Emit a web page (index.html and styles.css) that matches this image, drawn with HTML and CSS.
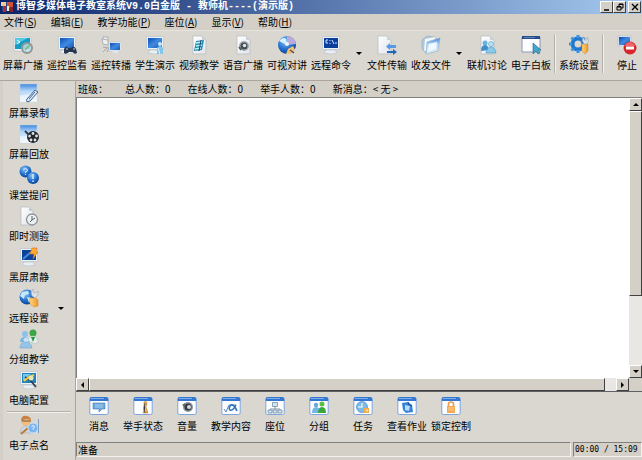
FILE: index.html
```html
<!DOCTYPE html>
<html lang="zh-CN">
<head>
<meta charset="utf-8">
<meta name="viewport" content="width=device-width,initial-scale=1">
<title>博智多媒体电子教室系统V9.0白金版</title>
<link rel="stylesheet" href="styles.css">
</head>
<body>

<!-- shared gradients and icon parts -->
<svg class="defs" aria-hidden="true">
  <defs>
    <linearGradient id="gBlue" x1="0" y1="0" x2="1" y2="1"><stop offset="0" stop-color="#0c4cb4"/><stop offset=".5" stop-color="#3f8be0"/><stop offset="1" stop-color="#1b57b5"/></linearGradient>
    <linearGradient id="gSky" x1="0" y1="0" x2="0" y2="1"><stop offset="0" stop-color="#3f86df"/><stop offset=".4" stop-color="#b8d9f8"/><stop offset="1" stop-color="#e6f2fd"/></linearGradient>
    <linearGradient id="gPaper" x1="0" y1="0" x2="1" y2="1"><stop offset="0" stop-color="#fff"/><stop offset="1" stop-color="#dfe4ea"/></linearGradient>
    <radialGradient id="gBall" cx=".4" cy=".3" r=".7"><stop offset="0" stop-color="#8cc4f8"/><stop offset=".6" stop-color="#2371cd"/><stop offset="1" stop-color="#0d459c"/></radialGradient>
    <linearGradient id="gGold" x1="0" y1="0" x2="1" y2="0"><stop offset="0" stop-color="#ffd778"/><stop offset="1" stop-color="#ee962b"/></linearGradient>
  </defs>
  <symbol id="monitor" viewBox="0 0 20 20">
    <path d="M5 15h9l2 3q-6 2-13 0z" fill="#e9eef3" stroke="#b4bec8" stroke-width=".6"/>
    <rect x="1.5" y="1.5" width="17" height="13" rx="1" fill="#edf2f6" stroke="#b4c0cb" stroke-width=".7"/>
    <rect x="3" y="3" width="14" height="10" fill="url(#gBlue)"/>
  </symbol>
  <symbol id="page" viewBox="0 0 20 20">
    <path d="M4 1h9l4 4v14H4z" fill="url(#gPaper)" stroke="#b3bac2" stroke-width=".7"/>
    <path d="M13 1v4h4z" fill="#cad2da"/>
  </symbol>
  <symbol id="win" viewBox="0 0 20 20">
    <rect x=".8" y="1.5" width="18.4" height="17" rx="1.5" fill="#fcfdff" stroke="#7da5dc"/>
    <path d="M.8 5V3Q.8 1 3 1h14q2.200 0 2.200 2v2z" fill="#3577d0"/>
    <path d="M2 2.500h13" stroke="#8fbcf1" stroke-width=".8"/>
  </symbol>
  <symbol id="note" viewBox="0 0 20 20">
    <path d="M1 1h17v18H1z" fill="url(#gSky)" stroke="#bdd0e5" stroke-width=".5"/>
    <path d="M1 12q9 1 17-5v12H1z" fill="#fff" fill-opacity=".5"/>
  </symbol>
</svg>

<header class="titlebar">
  <svg class="logo" viewBox="0 0 12 12"><path d="M1 1h9v9H1z" fill="#264c8d"/><path d="M0 1h5v4H0z" fill="#eecb9d"/><path d="M6 1h6v6H6z" fill="#cf5034"/><path d="M2 5h3v6H2z" fill="#b4272e"/><path d="M6 5h2v5H6z" fill="#f8e8d0"/><path d="M9 6h3v5H9z" fill="#872229"/></svg>
  <h1>博智多媒体电子教室系统V9.0白金版 - 教师机----(演示版)</h1>
  <div class="win-buttons">
    <button aria-label="最小化"><svg viewBox="0 0 10 8"><path d="M2 7h5" stroke="#000" stroke-width="1.500"/></svg></button>
    <button aria-label="还原"><svg viewBox="0 0 10 8"><path d="M4 3V1h4v4H6M4 1.500h4M2 3.500h4V7H2zM2 4h4" fill="none" stroke="#000"/></svg></button>
    <button class="close" aria-label="关闭"><svg viewBox="0 0 10 8"><path d="M2 1l6 6M8 1L2 7" stroke="#000" stroke-width="1.400"/></svg></button>
  </div>
</header>

<nav class="menubar">
  <button>文件(<u>S</u>)</button>
  <button>编辑(<u>E</u>)</button>
  <button>教学功能(<u>P</u>)</button>
  <button>座位(<u>A</u>)</button>
  <button>显示(<u>V</u>)</button>
  <button>帮助(<u>H</u>)</button>
</nav>

<div class="toolbar">
  <button class="tool"><svg viewBox="0 0 20 20"><rect x="1" y="2" width="17" height="14" rx="1" fill="#f0f5f7" stroke="#a9bac6" stroke-width=".6"/><path d="M2 3h15v11H2z" fill="#179bc4"/><path d="M2 3h13L2 10z" fill="#55c7e2"/><path d="M4 5l3 2-3 2" stroke="#fff" fill="none"/><circle cx="14" cy="13" r="5" fill="#bfe0e8" fill-opacity=".8" stroke="#8f9693" stroke-width="2"/><path d="M12 15l5-5" stroke="#78b874" stroke-width="1.500"/></svg>屏幕广播</button>
  <button class="tool"><svg viewBox="0 0 20 20"><use href="#monitor"/><path d="M7 18v-4q2-4 4-1h3q3-3 5 1l1 4q-3 2-4-1h-4q-3 3-5 1z" fill="#26354d"/><path d="M9 14h2M16 14h2" stroke="#b4c8e5"/></svg>遥控监看</button>
  <button class="tool"><svg viewBox="0 0 20 20"><path d="M1 4l6 1v5l-5-1zM2 4V2h5v3" fill="#f0f0ee" stroke="#9aa3ab" stroke-width=".8"/><path d="M2 17l4-4M2 12l6 1-2 4" stroke="#a4a7a9" fill="none"/><path d="M8 7h12v9H8z" fill="#eef3f7" stroke="#a8b5c3" stroke-width=".5"/><path d="M9 8h10v7H9z" fill="url(#gBlue)"/><path d="M12 16h5l1 2h-7z" fill="#dfe5eb"/></svg>遥控转播</button>
  <button class="tool"><svg viewBox="0 0 20 20"><use href="#monitor"/><circle cx="15" cy="9" r="2" fill="#c7e7fb"/><path d="M12 13q3-4 6 0v6h-6z" fill="#80c5ee"/><path d="M13 13l2 6" stroke="#e0f4ff"/></svg>学生演示</button>
  <button class="tool"><svg viewBox="0 0 20 20"><use href="#page"/><path d="M7 6l8-1-2 10-8 1z" fill="#238bb2"/><path d="M7 8l6-1M7 11l6-1M6 14l6-1" stroke="#bdf0fa" stroke-width="1.300"/><path d="M12 5l-2 11" stroke="#1a4969"/></svg>视频教学</button>
  <button class="tool"><svg viewBox="0 0 20 20"><use href="#page"/><circle cx="11" cy="11" r="5" fill="#a5abaf"/><circle cx="11" cy="11" r="3.500" fill="#444d54"/><circle cx="11.500" cy="10.500" r="1.800" fill="#dce2e5"/><path d="M6 12l2 3" stroke="#4b555d" stroke-width="1.500"/></svg>语音广播</button>
  <button class="tool"><svg viewBox="0 0 20 20"><circle cx="10" cy="10" r="9" fill="url(#gBall)"/><path d="M10 1a9 9 0 0 1 9 8l-9 1z" fill="#b8a9de"/><path d="M2 6q4-5 7-2l1 6z" fill="#d7f1ff"/><circle cx="10" cy="9" r="2" fill="#eef7fb"/><path d="M11 14l5-3 2 4-5 4h-4z" fill="#f1c17b"/><path d="M13 15l4 3" stroke="#5a4e49" stroke-width="1.500"/></svg>可视对讲</button>
  <button class="tool"><svg viewBox="0 0 20 20"><use href="#monitor"/><path d="M3 3h14v10H3z" fill="#0a3d9c"/><path d="M7 5H5v3h2M9 5v1M9 8v1M11 5l2 4M14 8h2" stroke="#d5e7ff" fill="none"/></svg>远程命令</button>
  <button class="drop" aria-label="远程命令选项"></button>
  <button class="tool"><svg viewBox="0 0 20 20"><path d="M1 1h9l4 4v14H1z" fill="url(#gPaper)" stroke="#b3bac2" stroke-width=".7"/><path d="M10 1v4h4" fill="#ccd4dd"/><path d="M19 10h-6V8l-4 3.500 4 3.500v-2h6z" fill="#5499e6"/><path d="M10 16h6v-2l4 3-4 3v-2h-6z" fill="#2265bb"/></svg>文件传输</button>
  <button class="tool"><svg viewBox="0 0 20 20"><path d="M1 5l5-4 8 1v13l-9 3-4-4z" fill="#b1c9d9" stroke="#8ba7bd" stroke-width=".6"/><path d="M4 4l10-2v12L3 16z" fill="#f2f7fa"/><path d="M6 7l13-4-2 13-12 3z" fill="url(#gSky)" stroke="#89aac3" stroke-width=".6"/><path d="M8 9l8-2-1 7-8 2z" fill="#f3faff"/></svg>收发文件</button>
  <button class="drop" aria-label="收发文件选项"></button>
  <button class="tool"><svg viewBox="0 0 20 20"><use href="#page"/><circle cx="8" cy="8" r="2.500" fill="#69b2dc"/><path d="M4 16q0-6 4-6 3 0 4 5z" fill="#3f8ecb"/><circle cx="14" cy="9" r="2.500" fill="#b7e1f3" stroke="#56a6ce" stroke-width=".6"/><path d="M9 18q1-6 5-6t5 6z" fill="#8bcae8" stroke="#4796c4" stroke-width=".6"/></svg>联机讨论</button>
  <button class="tool"><svg viewBox="0 0 20 20"><path d="M1 2h18v15H1z" fill="#fdfdff" stroke="#8799b5"/><path d="M1 1h18v3H1z" fill="#254d8c"/><path d="M3 2.500h11" stroke="#809bc3" stroke-width=".7"/><path d="M12 8v11l3-3 2 3 2-1-2-3h3z" fill="#40a6cf" stroke="#246485" stroke-width=".6"/></svg>电子白板</button>
  <span class="split"></span>
  <button class="tool"><svg viewBox="0 0 20 20"><circle cx="9" cy="9" r="5.500" fill="none" stroke="#1f78ce" stroke-width="4"/><path d="M9 0v3M9 15v3M0 9h3M2.500 2.500l2 2M15.500 2.500l-2 2M2.500 15.500l2-2" stroke="#3b93e3" stroke-width="3"/><path d="M13 9h6v7l-3 3-3-3z" fill="url(#gGold)" stroke="#cf8026" stroke-width=".5"/><path d="M15 2l-2 3 2 4h3l2-4-2-3v3h-3z" fill="#d9e0e7" stroke="#9ba6af" stroke-width=".6"/></svg>系统设置</button>
  <span class="split"></span>
  <button class="tool last"><svg viewBox="0 0 20 20"><rect x="1" y="1" width="13" height="10" fill="#e8eff6" stroke="#acbac9" stroke-width=".6"/><path d="M2 2h11v8H2z" fill="url(#gBlue)"/><path d="M5 11h5l1 3H3z" fill="#dae3ec"/><circle cx="13" cy="13" r="6.500" fill="#d8262d"/><path d="M7.500 11q5-8 11 0z" fill="#ed6469"/><path d="M9 11.500h8v3H9z" fill="#fff"/></svg>停止</button>
</div>

<div class="workspace">
  <aside class="sidebar">
    <button class="side"><svg viewBox="0 0 20 20"><use href="#note"/><path d="M8 16l8-9 3 2-8 9q-5 2-3-2z" fill="#dce9f5" stroke="#3f608c"/><path d="M10 16l6-7" stroke="#416ba1"/></svg>屏幕录制</button>
    <button class="side"><svg viewBox="0 0 20 20"><use href="#note"/><circle cx="14" cy="13" r="6" fill="#24282c"/><g fill="#dde3e6"><circle cx="14" cy="9.500" r="1.400"/><circle cx="10.500" cy="12" r="1.400"/><circle cx="17.500" cy="12" r="1.400"/><circle cx="12" cy="16" r="1.400"/><circle cx="16" cy="16" r="1.400"/></g><path d="M6 7l4 4" stroke="#353b40" stroke-width="2"/></svg>屏幕回放</button>
    <button class="side"><svg viewBox="0 0 20 20"><circle cx="6.500" cy="6.500" r="6" fill="url(#gBall)"/><path d="M4.500 5q2-3 4 0 0 1-2 2v1M6.500 9v1" fill="none" stroke="#c2e1ff" stroke-width="1.200"/><circle cx="14" cy="13" r="6" fill="url(#gBall)"/><path d="M14 9v5M14 15.500V17" stroke="#d5edff" stroke-width="1.500"/></svg>课堂提问</button>
    <button class="side"><svg viewBox="0 0 20 20"><path d="M2 1h8l4 4v14H2z" fill="url(#gPaper)" stroke="#b3bac2" stroke-width=".7"/><path d="M10 1v4h4" fill="#c5ccd3"/><circle cx="13" cy="13.500" r="5.500" fill="#eef2f4" stroke="#8c9297" stroke-width="1.300"/><path d="M13 10v4l3-2M13 14l-2 2" stroke="#53616c" fill="none"/></svg>即时测验</button>
    <button class="side"><svg viewBox="0 0 20 20"><use href="#monitor"/><path d="M3 3h14v10H3z" fill="#0b4199"/><path d="M4 12l8-7" stroke="#3f8de1" stroke-width="2"/><path d="M13 1h5l-1 4h2l-5 7 1-5h-4z" fill="#ffac2d" stroke="#d86c1b" stroke-width=".6"/></svg>黑屏肃静</button>
    <div class="side-row">
      <button class="side"><svg viewBox="0 0 20 20"><circle cx="8" cy="9" r="7.500" fill="url(#gBall)"/><path d="M3 4l6-1 1 3-4 1-1 4-4-3zM8 9l5 1-3 5z" fill="#c8e8f9"/><path d="M11 10h6l2 2v6l-4 1-4-3z" fill="url(#gGold)" stroke="#d68a30" stroke-width=".5"/><path d="M14 1l-2 3 1 4 3 2 3-3V3l-2 2-3-1z" fill="#dce2e8" stroke="#9da6ae" stroke-width=".6"/></svg>远程设置</button>
      <button class="drop" aria-label="远程设置选项"></button>
    </div>
    <button class="side"><svg viewBox="0 0 20 20"><circle cx="6" cy="5" r="3" fill="#8bc2e8"/><path d="M1 13q0-5 5-5 4 0 5 5z" fill="#77b4e3"/><circle cx="14" cy="4" r="3.500" fill="#3fa348"/><path d="M9 12q0-5 5-5 5 0 5 6l-3 2z" fill="#e3eeeb" stroke="#9ab8ac" stroke-width=".5"/><path d="M12 8l2 5 2-5z" fill="#2b953b"/><circle cx="7" cy="11" r="2.500" fill="#c5e2f8"/><path d="M1 19q0-6 6-6 5 0 6 6z" fill="#96c4e9" stroke="#6b9fc7" stroke-width=".5"/></svg>分组教学</button>
    <button class="side"><svg viewBox="0 0 20 20"><use href="#monitor"/><path d="M3 3h14v10H3z" fill="#2183bd"/><path d="M4 4h8l-8 7z" fill="#76c6e6"/><path d="M6 7l5 3 6 7" stroke="#343c48" stroke-width="1.700" fill="none"/><path d="M5 11l5-4 5-2" stroke="#f6c93f" stroke-width="2" fill="none"/><circle cx="12" cy="8" r="2.500" fill="#e8e5b9"/></svg>电脑配置</button>
    <hr>
    <button class="side"><svg viewBox="0 0 20 20"><circle cx="7" cy="6" r="5" fill="#f4bd7d"/><path d="M2 6q0-6 6-5 4 1 4 4l-5-1z" fill="#c68345"/><path d="M3 6h9" stroke="#6d5646"/><path d="M1 18q1-7 6-7t6 7z" fill="#cbd8e4" stroke="#98a8b7" stroke-width=".5"/><path d="M2 19l7-6" stroke="#c47833" stroke-width="2"/><circle cx="14" cy="13" r="5" fill="#7bb5ed" stroke="#c8e1f8"/><path d="M12.500 11.500q2-2 3 0 0 1-1.500 2v1" stroke="#fff" fill="none"/><path d="M19.500 4v14" stroke="#6991c0" stroke-width=".8"/></svg>电子点名</button>
  </aside>

  <main class="main">
    <div class="info">
      <span>班级：</span><span>总人数：0</span><span>在线人数：0</span><span>举手人数：0</span><span>新消息：&lt; 无 &gt;</span>
    </div>

    <div class="view">
      <div class="canvas"></div>
      <div class="scroll vertical">
        <button class="arrow up" aria-label="向上滚动"></button>
        <div class="track"><div class="thumb"></div></div>
        <button class="arrow down" aria-label="向下滚动"></button>
      </div>
      <div class="scroll horizontal">
        <button class="arrow left" aria-label="向左滚动"></button>
        <div class="track"><div class="thumb"></div></div>
        <button class="arrow right" aria-label="向右滚动"></button>
      </div>
    </div>

    <div class="actions">
      <button class="tool"><svg viewBox="0 0 20 20"><use href="#win"/><path d="M4 7h12v6h-3l-3 3v-3H4z" fill="#6ba8df" stroke="#467fb7" stroke-width=".6"/><path d="M6 9h8M6 11h8" stroke="#c4e0f7" stroke-width=".7"/></svg>消息</button>
      <button class="tool"><svg viewBox="0 0 20 20"><use href="#win"/><path d="M11 6l2-1 1 3-1 3 2 6h-5l1-5z" fill="url(#gGold)" stroke="#a07134" stroke-width=".5"/><path d="M12 7l-1 5 1 5" stroke="#55504c"/></svg>举手状态</button>
      <button class="tool"><svg viewBox="0 0 20 20"><use href="#win"/><circle cx="11" cy="11" r="5" fill="#8e969b"/><circle cx="11" cy="11" r="3.500" fill="#343a41"/><circle cx="12" cy="11" r="2" fill="#d6dade"/><path d="M5 9l3-2v4z" fill="#60676d"/></svg>音量</button>
      <button class="tool"><svg viewBox="0 0 20 20"><use href="#win"/><path d="M3 13l2 3 3-7h7" fill="none" stroke="#5489bf"/><path d="M15 9q-3 6-6 5-2-2 1-5 3-1 6 6" fill="none" stroke="#2f70bd" stroke-width="1.500"/></svg>教学内容</button>
      <button class="tool"><svg viewBox="0 0 20 20"><use href="#win"/><path d="M10 10v3M5 14v-1h10v1" stroke="#8398a9" fill="none"/><path d="M7.500 6.500h5v4h-5zM3 14h4v3H3zM8 14h4v3H8zM13 14h4v3h-4z" fill="#d7e4ee" stroke="#7190a9" stroke-width=".8"/></svg>座位</button>
      <button class="tool"><svg viewBox="0 0 20 20"><use href="#win"/><circle cx="7" cy="9" r="2.200" fill="#65a8df"/><path d="M3 17q0-6 4-6t5 6z" fill="#73b6e5"/><circle cx="13" cy="8" r="2.500" fill="#5cbe45"/><path d="M9 17q0-6 4-6t4 6z" fill="#38a639"/></svg>分组</button>
      <button class="tool"><svg viewBox="0 0 20 20"><use href="#win"/><circle cx="9" cy="11" r="5.500" fill="#7dbae8" stroke="#4989c5" stroke-width=".7"/><path d="M9 7v4H5" stroke="#d9f0ff" stroke-width="1.500" fill="none"/><path d="M11 12h5v5h-5z" fill="#f5ad48"/><circle cx="14" cy="14.500" r="1" fill="#fff0bf"/></svg>任务</button>
      <button class="tool"><svg viewBox="0 0 20 20"><use href="#win"/><path d="M5 7l6-1 4 3 1 7-7 1-3-3z" fill="#3784d7"/><path d="M8 9l5 1-1 5-4-1z" fill="#b7dcfa"/><path d="M11 6l1 3 3 1" stroke="#164e99" fill="none"/></svg>查看作业</button>
      <button class="tool"><svg viewBox="0 0 20 20"><use href="#win"/><path d="M7.500 11V8q0-2 2.500-2t2.500 2v3" stroke="#e69c4f" stroke-width="1.600" fill="none"/><path d="M6 10h8v7H6z" fill="#f4a84f"/><path d="M7 12h6M7 14h6" stroke="#ffd8a3" stroke-width=".8"/></svg>锁定控制</button>
    </div>

    <footer class="status">
      <span class="ready">准备</span>
      <time class="clock">00:00 / 15:09</time>
    </footer>
  </main>
</div>

</body>
</html>
```
FILE: styles.css
```css
*{box-sizing:border-box}
body{margin:0;height:100vh;display:flex;flex-direction:column;overflow:hidden;
     font:10px/14px "Noto Sans CJK SC",sans-serif;background:#d4d0c8;color:#000}
button{margin:0;padding:0;border:none;background:none;font:inherit;color:inherit}
svg{display:block}
.defs{position:absolute;width:0;height:0}

/* title bar */
.titlebar{display:flex;align-items:center;height:14px;padding:0 1px;flex:none;
          background:linear-gradient(90deg,#0a246a,#a6caf0)}
.titlebar h1{flex:1;margin:0 0 0 3px;color:#fff;white-space:nowrap;
             font:bold 10px/14px "Liberation Mono","Noto Sans CJK SC",monospace}
.logo{width:12px;height:12px}
.win-buttons{display:flex}
.win-buttons button,.arrow,.thumb{background:#d4d0c8;border:1px solid;
             border-color:#fff #404040 #404040 #fff}
.win-buttons button{width:13px;height:12px;display:grid;place-items:center}
.win-buttons svg{width:10px;height:8px}
.win-buttons .close{margin-left:2px}

/* menu */
.menubar{display:flex;flex:none;gap:14px;height:16px;padding:1px 4px;white-space:nowrap}

/* big-icon toolbars */
.toolbar{display:flex;flex:none;height:50px;padding:4px 0 0 1px;
         background:#dad7d0;border-top:1px solid #e6e3dd}
.tool{width:44px;flex:none;display:flex;flex-direction:column;align-items:center;
      gap:3px;white-space:nowrap}
.tool svg{width:20px;height:20px}
.tool.last{width:30px;margin-left:auto}
.drop{width:12px;flex:none;display:grid;place-items:center}
.toolbar .drop{height:36px}
.drop::after{content:"";border:3px solid transparent;border-top-color:#000;border-bottom:0}
.split{width:2px;height:38px;margin:0 1px;flex:none;
       border-left:1px solid #b5b1a9;border-right:1px solid #f2f0ec}

/* workspace */
.workspace{display:flex;flex:1;min-height:0;border-top:1px solid #aaa69e}
.sidebar{width:76px;flex:none;padding:2px 4px 0;background:#dad7d0;
         border-left:3px solid #d4d0c8;border-right:1px solid #aaa69e}
.side{display:flex;flex-direction:column;gap:3px;height:41px;width:44px;
      align-items:center;white-space:nowrap}
.side svg{width:20px;height:20px}
.side-row{display:flex;gap:4px}
.sidebar hr{margin:0 0 2px;border:0;border-top:1px solid #b5b1a9;border-bottom:1px solid #f2f0ec}

.main{flex:1;min-width:0;display:flex;flex-direction:column}
.info{display:flex;flex:none;gap:17px;height:17px;padding:1px 2px;white-space:nowrap;
      border-bottom:1px solid #808080}
.view{flex:1;min-height:0;display:grid;
      grid-template-columns:1fr 13px;grid-template-rows:1fr 13px}
.canvas{background:#fff;border-left:1px solid #808080}

/* scrollbars */
.scroll{display:flex;background:#e9e7e3}
.vertical{flex-direction:column}
.arrow{width:13px;height:13px;flex:none;display:grid;place-items:center}
.arrow::after{content:"";border:3px solid transparent}
.up::after{border-bottom-color:#000;border-top:0}
.down::after{border-top-color:#000;border-bottom:0}
.left::after{border-right-color:#000;border-left:0}
.right::after{border-left-color:#000;border-right:0}
.track{flex:1}
.vertical .thumb{height:73%}
.horizontal .thumb{width:98%;height:13px}

/* bottom toolbar + status */
.actions{display:flex;flex:none;height:51px;padding:4px 0 0 1px;
         background:#dad7d0;border-top:1px solid #606060}
.status{display:flex;flex:none;gap:2px;height:18px;padding-bottom:3px}
.ready,.clock{border:1px solid;border-color:#808080 #f4f2ee #f4f2ee #808080}
.ready{flex:1;padding-left:1px;line-height:13px}
.clock{width:69px;padding-left:1px;font:8px/13px "DejaVu Sans Mono",monospace}
```
